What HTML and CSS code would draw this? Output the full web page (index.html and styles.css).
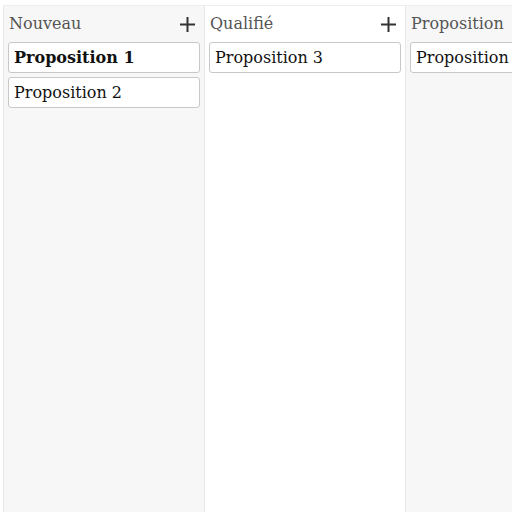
FILE: index.html
```html
<!DOCTYPE html>
<html lang="fr">
<head>
<meta charset="utf-8">
<link rel="stylesheet" href="styles.css">
</head>
<body>
<div class="board">
  <section class="column shaded">
    <header class="col-head">
      <span class="col-title">Nouveau</span>
      <svg class="add" width="15" height="15" viewBox="0 0 15 15"><path d="M7.5 0v15M0 7.5h15" stroke="#333" stroke-width="2"/></svg>
    </header>
    <div class="cards">
      <div class="card bold">Proposition 1</div>
      <div class="card">Proposition 2</div>
    </div>
  </section>
  <section class="column">
    <header class="col-head">
      <span class="col-title">Qualifié</span>
      <svg class="add" width="15" height="15" viewBox="0 0 15 15"><path d="M7.5 0v15M0 7.5h15" stroke="#333" stroke-width="2"/></svg>
    </header>
    <div class="cards">
      <div class="card">Proposition 3</div>
    </div>
  </section>
  <section class="column shaded">
    <header class="col-head">
      <span class="col-title">Proposition</span>
    </header>
    <div class="cards">
      <div class="card">Proposition 4</div>
    </div>
  </section>
</div>
</body>
</html>
```
FILE: styles.css
```css
html, body {
  margin: 0;
  height: 100%;
  overflow: hidden;
  background: #fff;
}
body {
  font-family: "DejaVu Serif", serif;
  font-size: 16px;
  color: #111;
}
.board {
  display: flex;
  padding: 5px 0 0 3px;
  height: 100%;
  box-sizing: border-box;
  overflow: hidden;
}
.column {
  flex: 0 0 201px;
  box-sizing: border-box;
  border-left: 1px solid #e8e8e8;
  border-top: 1px solid #eeeeee;
  padding: 0 4px;
  background: #fff;
}
.column.shaded {
  background: #f7f7f7;
}
.col-head {
  display: flex;
  align-items: center;
  justify-content: space-between;
  height: 36px;
  padding: 0 5px 0 1px;
}
.col-title {
  color: #555;
  white-space: nowrap;
  margin-bottom: 2px;
}
.add {
  display: block;
}
.cards {
  display: flex;
  flex-direction: column;
  gap: 4px;
}
.card {
  background: #fff;
  border: 1px solid #c8c8c8;
  border-radius: 3px;
  padding: 5px 5px;
  line-height: 19px;
  white-space: nowrap;
  overflow: hidden;
}
.card.bold {
  font-weight: bold;
}
```
